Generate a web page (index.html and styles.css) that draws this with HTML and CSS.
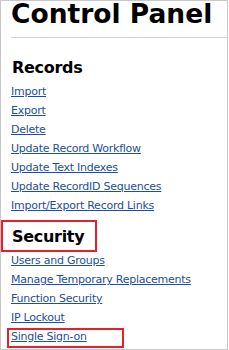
FILE: index.html
```html
<!DOCTYPE html>
<html lang="en">
<head>
    <meta charset="UTF-8">
    <meta name="viewport" content="width=device-width, initial-scale=1.0">
    <title>Control Panel</title>
    <link rel="stylesheet" href="styles.css">
</head>
<body>
    <div class="panel">
        <h1 class="title">Control Panel</h1>
        <hr class="rule">

        <div class="section">
            <h2 class="section-title">Records</h2>
            <ul class="links">
                <li><a href="#">Import</a></li>
                <li><a href="#">Export</a></li>
                <li><a href="#">Delete</a></li>
                <li><a href="#">Update Record Workflow</a></li>
                <li><a href="#">Update Text Indexes</a></li>
                <li><a href="#">Update RecordID Sequences</a></li>
                <li><a href="#">Import/Export Record Links</a></li>
            </ul>
        </div>

        <div class="section">
            <h2 class="section-title marked">Security</h2>
            <ul class="links">
                <li><a href="#">Users and Groups</a></li>
                <li><a href="#">Manage Temporary Replacements</a></li>
                <li><a href="#">Function Security</a></li>
                <li><a href="#">IP Lockout</a></li>
                <li class="marked-link"><a href="#">Single Sign-on</a></li>
            </ul>
        </div>
    </div>
</body>
</html>
```

FILE: styles.css
```css
body{
    margin: 0;
    background-color: white;
    font-family: "DejaVu Sans", Verdana, sans-serif;
}
.panel{
    box-sizing: border-box;
    width: 228px;
    height: 350px;
    border: 1px solid #c8c8c8;
    padding-left: 10px;
    overflow: hidden;
}
.title{
    margin: 0;
    font-size: 26.5px;
    line-height: 26px;
    font-weight: bold;
    color: black;
    white-space: nowrap;
}
.rule{
    margin: 10px 0 0 0;
    border: none;
    border-top: 1px solid #d6d6d6;
}
.section-title{
    position: relative;
    margin: 20px 0 4px 1px;
    font-size: 16px;
    line-height: 20px;
    letter-spacing: -0.3px;
    font-weight: bold;
    color: black;
}
.section + .section .section-title{
    margin-top: 12px;
}
.marked::after{
    content: "";
    position: absolute;
    left: -11px;
    top: -7px;
    width: 96px;
    height: 32px;
    box-sizing: border-box;
    border: 2px solid #e8202a;
}
.links{
    list-style: none;
    margin: 0;
    padding: 0;
}
.links li{
    position: relative;
    font-size: 11px;
    line-height: 19px;
    letter-spacing: -0.25px;
}
.links a{
    color: #1c4f9c;
}
.marked-link::after{
    content: "";
    position: absolute;
    left: -4px;
    top: 1px;
    width: 117px;
    height: 20px;
    box-sizing: border-box;
    border: 2px solid #e8202a;
}
```
